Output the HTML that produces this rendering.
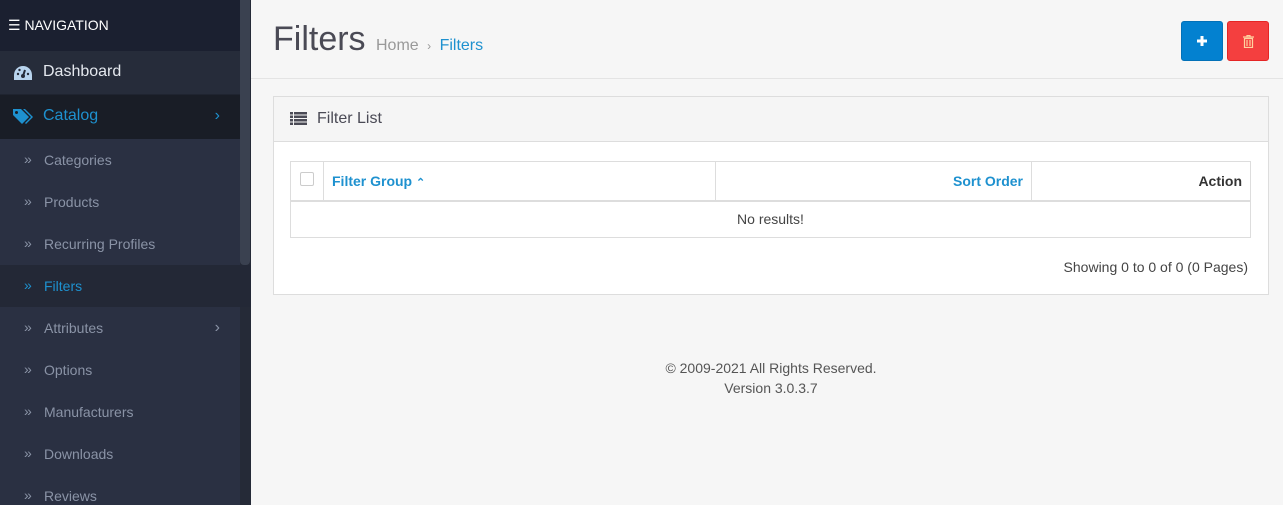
<!DOCTYPE html>
<html><head><style>
*{box-sizing:border-box;margin:0;padding:0}
html,body{width:1283px;height:505px;overflow:hidden}
body{background:#f6f6f6;font-family:"Liberation Sans",sans-serif;position:relative}
#side{position:absolute;left:0;top:0;width:251px;height:505px;background:#252a37}
#sideinner{position:absolute;left:0;top:0;width:240px;height:505px;background:#2a3042}
.navh{height:51px;background:#1b2030;color:#fff;font-size:14px;padding:17px 0 0 8px}
.dash{height:44px;background:#262c3a;color:#e4e8ee;font-size:16px;padding:12px 0 0 43px;position:relative;border-bottom:1px solid #1f2430}
.cat{height:44px;background:#191d26;color:#1e91cf;font-size:16px;padding:12px 0 0 43px;position:relative}
.sub{height:42px;color:#8a93a6;font-size:14px;padding:13px 0 0 44px;position:relative}
.sub:before{content:"»";position:absolute;left:24px;top:12px;font-size:14px}
.sub.act{background:#232836;color:#1e91cf;width:251px}
.arr{position:absolute;right:20px;top:12px;font-size:16px}
#scroll{position:absolute;left:240px;top:0;width:10px;height:265px;background:#3a4150;border-radius:0 0 4px 4px}
#main{position:absolute;left:251px;top:0;right:0}
.hdr{height:79px;border-bottom:1px solid #e4e4e4;position:relative}
.hdr h1{position:absolute;left:22px;top:20px;font-weight:normal;font-size:34px;color:#4a4a55}
.bc{position:absolute;left:125px;top:37px;font-size:16px;color:#999}
.bc b{font-weight:normal;color:#1e91cf}
.btn{position:absolute;top:21px;width:42px;height:40px;border-radius:3px}
.panel{position:absolute;left:22px;top:96px;width:996px;height:199px;background:#fff;border:1px solid #ddd}
.ph{height:45px;background:#f5f5f5;border-bottom:1px solid #ddd;font-size:16px;color:#4a4a55;padding:13px 0 0 43px;position:relative}
table{position:absolute;left:16px;top:64px;width:961px;border-collapse:collapse;font-size:14px}
td{border:1px solid #ddd;height:37px;padding:0 8px}
th{border:1px solid #ddd;border-bottom:2px solid #ddd;height:39px;padding:0 8px;color:#1e91cf;font-weight:bold}
.foot{position:absolute;left:0;width:1040px;text-align:center;top:358px;font-size:14px;color:#555;line-height:20px}
</style></head><body>
<div id="side"><div id="sideinner">
<div class="navh">&#9776; NAVIGATION</div>
<div class="dash"><svg style="position:absolute;left:14px;top:15px" width="18" height="14" viewBox="0 0 18 14"><path d="M9 0A9 9 0 0 0 0 9v5h18V9A9 9 0 0 0 9 0z" fill="#b8d4ee"/><circle cx="9" cy="10" r="2" fill="#262c3a"/><path d="M9 10L11 4" stroke="#262c3a" stroke-width="2"/><circle cx="4" cy="8" r="1.2" fill="#262c3a"/><circle cx="5.5" cy="4" r="1.2" fill="#262c3a"/><circle cx="14" cy="8" r="1.2" fill="#262c3a"/></svg>Dashboard</div>
<div class="cat"><svg style="position:absolute;left:13px;top:14px" width="20" height="16" viewBox="0 0 20 16"><path d="M0 0h8l8 8-7 7-9-9z" fill="#1e91cf"/><circle cx="3.5" cy="3.5" r="1.5" fill="#191d26"/><path d="M10 0h2l8 8-7 7-1-1 6-6z" fill="#1e91cf"/></svg>Catalog<span class="arr">›</span></div>
<div class="sub">Categories</div>
<div class="sub">Products</div>
<div class="sub">Recurring Profiles</div>
<div class="sub act">Filters</div>
<div class="sub">Attributes<span class="arr">›</span></div>
<div class="sub">Options</div>
<div class="sub">Manufacturers</div>
<div class="sub">Downloads</div>
<div class="sub">Reviews</div>
</div><div id="scroll"></div></div>
<div id="main">
<div class="hdr"><h1>Filters</h1><div class="bc">Home <span style="font-size:12px;margin:0 4px">›</span> <b>Filters</b></div>
<div class="btn" style="left:930px;background:#0381d0;border:1px solid #0371b8"><svg style="position:absolute;left:14px;top:13px" width="12" height="12"><path d="M6 1v10M1 6h10" stroke="#fff" stroke-width="3"/></svg></div>
<div class="btn" style="left:976px;background:#f43f3f;border:1px solid #e52525"><svg style="position:absolute;left:15px;top:13px" width="11" height="13" viewBox="0 0 11 13"><path d="M0 2h11M4 2V0.5h3V2M1.5 3.5h8V12.5h-8zM4 5v6M7 5v6" stroke="#ffd2a0" stroke-width="1.2" fill="none"/></svg></div>
</div>
<div class="panel"><div class="ph"><svg style="position:absolute;left:16px;top:15px" width="17" height="13"><g fill="#4a4a55"><rect x="0" y="0" width="3" height="2.5"/><rect x="4" y="0" width="13" height="2.5"/><rect x="0" y="3.5" width="3" height="2.5"/><rect x="4" y="3.5" width="13" height="2.5"/><rect x="0" y="7" width="3" height="2.5"/><rect x="4" y="7" width="13" height="2.5"/><rect x="0" y="10.5" width="3" height="2.5"/><rect x="4" y="10.5" width="13" height="2.5"/></g></svg>Filter List</div>
<table><tr><th style="width:33px"><span style="display:inline-block;width:14px;height:14px;border:1px solid #ccc;border-radius:2px"></span></th><th style="text-align:left;width:392px">Filter Group <span style="font-size:11px">&#8963;</span></th><th style="text-align:right;width:316px">Sort Order</th><th style="text-align:right;color:#333">Action</th></tr>
<tr><td colspan="4" style="text-align:center;color:#444">No results!</td></tr></table>
<div style="position:absolute;right:20px;top:162px;font-size:14px;color:#444">Showing 0 to 0 of 0 (0 Pages)</div>
</div>
<div class="foot">© 2009-2021 All Rights Reserved.<br>Version 3.0.3.7</div>
</div>
</body></html>
